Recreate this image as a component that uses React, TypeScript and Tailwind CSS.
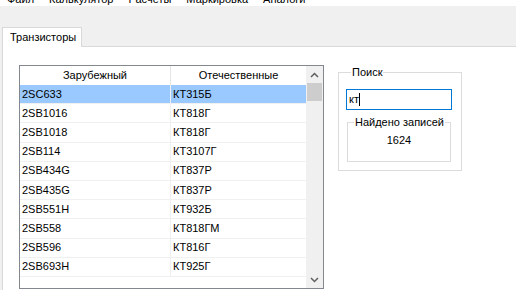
const rows: [string, string][] = [
  ["2SC633", "КТ315Б"],
  ["2SB1016", "КТ818Г"],
  ["2SB1018", "КТ818Г"],
  ["2SB114", "КТ3107Г"],
  ["2SB434G", "КТ837Р"],
  ["2SB435G", "КТ837Р"],
  ["2SB551H", "КТ932Б"],
  ["2SB558", "КТ818ГМ"],
  ["2SB596", "КТ816Г"],
  ["2SB693H", "КТ925Г"],
];

const menu = ["Файл", "Калькулятор", "Расчеты", "Маркировка", "Аналоги"];

function Chevron({ down }: { down?: boolean }) {
  return (
    <svg width="9" height="6" viewBox="0 0 9 6" className={down ? "rotate-180" : ""}>
      <path d="M1 5 L4.5 1.5 L8 5" fill="none" stroke="#606060" strokeWidth="1.5" />
    </svg>
  );
}

export default function App() {
  return (
    <div className="w-[516px] h-[290px] overflow-hidden bg-[#f0f0f0] text-[11px] leading-[13px] text-black font-['Liberation_Sans',Arial,sans-serif] flex flex-col">
      {/* menu strip, scrolled off the top */}
      <div className="h-[6px] bg-white overflow-hidden shrink-0">
        <div className="flex gap-[15px] pl-[7px] -mt-[7px]">
          {menu.map((m) => (
            <span key={m}>{m}</span>
          ))}
        </div>
      </div>

      {/* tabs */}
      <div className="flex pt-[21px] pl-[2px] shrink-0">
        <div className="relative z-10 -mb-px h-[20px] w-[80px] bg-white border border-b-0 border-[#d9d9d9] pl-[7px] flex items-center">
          Транзисторы
        </div>
      </div>

      {/* tab page */}
      <div className="flex-1 ml-[2px] bg-white border-t border-l border-[#d9d9d9] pl-[16px] pt-[18px] flex items-start">
        {/* list view */}
        <div className="w-[305px] h-[224px] border border-[#828790] flex shrink-0 overflow-hidden">
          <div className="w-[286px] flex flex-col">
            <div className="h-[19px] flex shrink-0">
              <div className="w-[151px] border-r border-[#e5e5e5] flex items-center justify-center">Зарубежный</div>
              <div className="flex-1 flex items-center justify-center">Отечественные</div>
            </div>
            {rows.map(([a, b], i) => (
              <div
                key={a}
                className={`h-[19.2px] flex shrink-0 border-b border-[#f0f0f0] ${i === 0 ? "bg-[#99c9ff]" : ""}`}
              >
                <div className="w-[151px] border-r border-[#f0f0f0] pl-[2px] flex items-center">{a}</div>
                <div className="flex-1 pl-[2px] flex items-center">{b}</div>
              </div>
            ))}
          </div>
          <div className="w-[17px] bg-[#f0f0f0] flex flex-col items-center">
            <div className="h-[17px] flex items-center justify-center">
              <Chevron />
            </div>
            <div className="w-[15px] h-[18px] bg-[#cdcdcd]" />
            <div className="flex-1" />
            <div className="h-[17px] flex items-center justify-center">
              <Chevron down />
            </div>
          </div>
        </div>

        {/* search group */}
        <fieldset className="ml-[14px] w-[124px] h-[106px] border border-[#dcdcdc] px-[7px]">
          <legend className="ml-[5px] px-[1px] leading-[14px]">Поиск</legend>
          <div className="mt-[10px] w-[106px] h-[21px] border border-[#0078d7] pl-[2px] flex items-center">
            <span>кт</span>
            <span className="w-px h-[13px] bg-black" />
          </div>
          <fieldset className="mt-[5px] ml-[1px] w-[104px] h-[47px] border border-[#dcdcdc]">
            <legend className="ml-[6px] px-[1px] leading-[14px]">Найдено записей</legend>
            <div className="flex justify-center pt-[5px]">1624</div>
          </fieldset>
        </fieldset>
      </div>
    </div>
  );
}
